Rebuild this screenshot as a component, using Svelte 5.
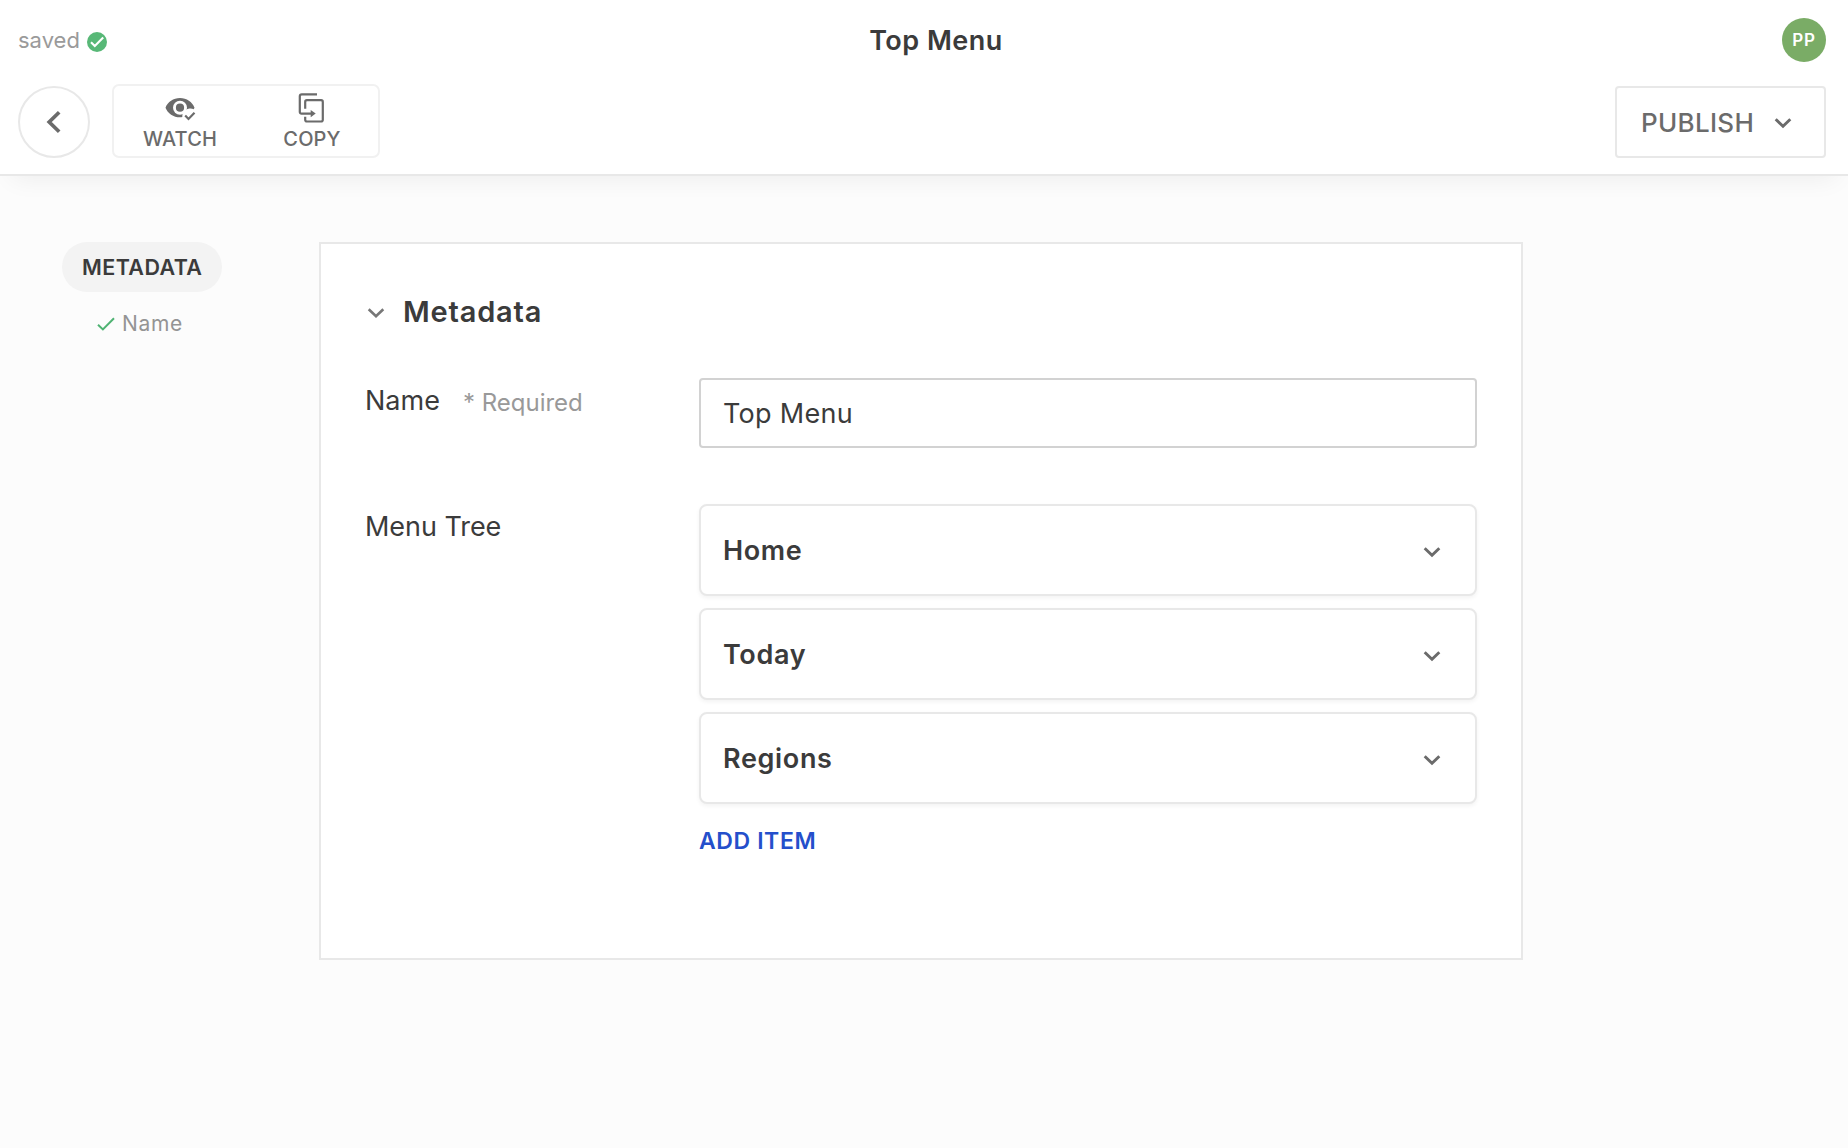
<script>
  const items = $state(['Home', 'Today', 'Regions']);
  let name = $state('Top Menu');
</script>

{#snippet chevron()}
  <svg class="chevron" width="18" height="12" viewBox="0 0 18 12" aria-hidden="true">
    <path d="M1.7 2.2 9 9.3l7.3-7.1" />
  </svg>
{/snippet}

<div class="page">
  <header>
    <div class="row title-row">
      <div class="status">
        <span>saved</span>
        <svg width="20" height="20" viewBox="0 0 20 20" aria-hidden="true">
          <circle cx="10" cy="10" r="10" fill="#58b877" />
          <path d="M4 10.2l3.8 3.9 8.4-8.5" fill="none" stroke="#fff" stroke-width="2.1" />
        </svg>
      </div>
      <h1>Top Menu</h1>
      <div class="avatar">PP</div>
    </div>
    <div class="row actions">
      <button class="back" aria-label="Back">
        <svg width="16" height="24" viewBox="0 0 16 24" aria-hidden="true">
          <path d="M13.2 2.2 3.2 12l10 9.8" fill="none" stroke="#6b6b6b" stroke-width="3.7" />
        </svg>
      </button>
      <div class="tools">
        <button class="tool watch">
          <svg width="32" height="32" viewBox="0 0 32 32" aria-hidden="true">
            <path fill="#6b6b6b" d="M1.5 14.7C3.8 8.9 9.3 5 16 5s12.2 3.9 14.5 9.7l-.8 1.6c-1.3-.7-2.7-.9-4.2-.7-2.800.3-5.200 2.100-6.500 4.700-.6 1.200-.8 2.400-.7 3.800-.8.200-1.500.2-2.300.2C9.300 24.300 3.800 20.500 1.500 14.700Z" />
            <circle cx="16" cy="14.7" r="7" fill="#fff" />
            <circle cx="16" cy="14.7" r="4.1" fill="#6b6b6b" />
            <path d="M21.200 22.500l3.300 3.500 6-6.300" fill="none" stroke="#6b6b6b" stroke-width="2.200" />
          </svg>
          <span>WATCH</span>
        </button>
        <button class="tool copy">
          <svg width="28" height="32" viewBox="0 0 28 32" aria-hidden="true">
            <g fill="none" stroke="#6b6b6b" stroke-width="2.2">
              <path d="M20 2.3H4.800a2 2 0 0 0-2 2v15.600a1.700 1.700 0 0 0 1.700 1.700h10" />
              <path d="M8.200 16.700V9.900a1.700 1.700 0 0 1 1.700-1.700h14.200a1.700 1.700 0 0 1 1.700 1.700v17.900a1.700 1.700 0 0 1-1.700 1.700H9.900a1.700 1.700 0 0 1-1.700-1.700v-3" />
            </g>
            <path d="M13.700 17.900l5 3.700-5 3.700z" fill="#6b6b6b" />
          </svg>
          <span>COPY</span>
        </button>
      </div>
      <button class="publish"><span>PUBLISH</span>{@render chevron()}</button>
    </div>
  </header>

  <div class="body">
    <nav>
      <div class="pill">METADATA</div>
      <div class="entry">
        <svg width="18" height="14" viewBox="0 0 18 14" aria-hidden="true">
          <path d="M1 7.7l4.900 4.700L17 1.300" fill="none" stroke="#4fb373" stroke-width="2" />
        </svg>
        <span>Name</span>
      </div>
    </nav>

    <main>
      <div class="heading">
        {@render chevron()}
        <h2>Metadata</h2>
      </div>
      <div class="field">
        <div class="label">
          <label for="name">Name</label>
          <span class="required">* Required</span>
        </div>
        <input id="name" bind:value={name} />
      </div>
      <div class="field">
        <div class="label tree">Menu Tree</div>
        <div class="cards">
          {#each items as item}
            <div class="card"><span>{item}</span>{@render chevron()}</div>
          {/each}
          <button class="add">ADD ITEM</button>
        </div>
      </div>
    </main>
  </div>
</div>

<style>
  :global(body) {
    background: #fcfcfc;
  }
  .page {
    min-height: 1148px;
    font-family: Inter, 'Liberation Sans', sans-serif;
    color: #3b3b3b;
    overflow: hidden;
  }
  .page :global(*) {
    box-sizing: border-box;
  }
  button {
    font: inherit;
    color: inherit;
    background: none;
    border: 0;
    padding: 0;
    margin: 0;
  }
  svg {
    display: block;
    flex: none;
  }
  .chevron path {
    fill: none;
    stroke: #6b6b6b;
    stroke-width: 2.9;
  }
  header {
    height: 176px;
    padding: 0 22px 0 18px;
    background: #fff;
    border-bottom: 2px solid #e8e8e8;
    box-shadow: 0 14px 24px -12px rgba(0, 0, 0, 0.065);
  }
  .row {
    display: flex;
  }
  .title-row {
    display: grid;
    grid-template-columns: 1fr auto 1fr;
    align-items: center;
    height: 80px;
  }
  .status {
    display: flex;
    align-items: center;
    gap: 7px;
    font-size: 22px;
    color: #9a9a9a;
  }
  .status svg {
    margin-top: 4px;
  }
  h1 {
    margin: 0 0 0 28px;
    font-size: 27px;
    font-weight: 600;
    letter-spacing: 0.5px;
  }
  .avatar {
    justify-self: end;
    display: flex;
    align-items: center;
    justify-content: center;
    width: 44px;
    height: 44px;
    border-radius: 50%;
    background: #7aac66;
    color: #fff;
    font-size: 17px;
    font-weight: 600;
    letter-spacing: 0.9px;
  }
  .actions {
    align-items: flex-end;
    height: 78px;
  }
  .back {
    display: flex;
    align-items: center;
    justify-content: center;
    width: 72px;
    height: 72px;
    border: 2px solid #e8e8e8;
    border-radius: 50%;
  }
  .tools {
    display: flex;
    width: 268px;
    height: 74px;
    margin-left: 22px;
    border: 2px solid #f1f1f1;
    border-radius: 7px;
  }
  .tool {
    display: flex;
    flex-direction: column;
    align-items: center;
    gap: 3px;
    width: 132px;
    padding-top: 6px;
    font-size: 20px;
    line-height: 24px;
    font-weight: 500;
    letter-spacing: 0.15px;
    color: #6b6b6b;
  }
  .watch svg {
    margin: 1px 0 -1px;
  }
  .copy svg {
    margin-right: 2px;
  }
  .publish {
    display: flex;
    align-items: center;
    justify-content: space-between;
    width: 211px;
    height: 72px;
    margin-left: auto;
    padding: 0 32px 0 24px;
    border: 2px solid #e8e8e8;
    border-radius: 4px;
    color: #6b6b6b;
    font-size: 26px;
    font-weight: 500;
    letter-spacing: 0.3px;
  }
  .publish span {
    margin-top: 1px;
  }
  .publish .chevron {
    margin-top: 2px;
  }
  .body {
    display: flex;
    align-items: flex-start;
    padding: 66px 0 0 62px;
  }
  nav {
    width: 257px;
  }
  .pill {
    width: 160px;
    height: 50px;
    padding-left: 20px;
    border-radius: 25px;
    background: #f3f3f3;
    font-size: 21.5px;
    line-height: 50px;
    font-weight: 600;
    letter-spacing: 0.4px;
  }
  .entry {
    display: flex;
    align-items: center;
    gap: 7px;
    height: 30px;
    margin-top: 16px;
    padding-left: 35px;
    font-size: 21px;
    letter-spacing: 0.65px;
    color: #949494;
  }
  .entry svg {
    margin-top: 2px;
  }
  main {
    width: 1204px;
    min-height: 718px;
    padding: 47px 44px 0;
    background: #fff;
    border: 2px solid #e8e8e8;
  }
  .heading {
    display: flex;
    align-items: center;
    gap: 18px;
    height: 40px;
    margin-bottom: 47px;
    padding-left: 2px;
  }
  .heading .chevron {
    margin-top: 3px;
  }
  .heading .chevron path {
    stroke: #777;
    stroke-width: 2.6;
  }
  h2 {
    margin: 0;
    font-size: 29px;
    font-weight: 600;
    letter-spacing: 0.8px;
  }
  .field {
    display: grid;
    grid-template-columns: 334px 778px;
  }
  .field + .field {
    margin-top: 56px;
  }
  .label {
    display: flex;
    padding-top: 3px;
    font-size: 27px;
    line-height: 40px;
  }
  .required {
    margin: 2px 0 0 23px;
    font-size: 24px;
    letter-spacing: 0;
    color: #999;
  }
  .tree {
    letter-spacing: -0.05px;
  }
  input {
    width: 778px;
    height: 70px;
    padding: 0 22px;
    border: 2px solid #d2d2d2;
    border-radius: 4px;
    background: #fff;
    color: #3b3b3b;
    font: 400 27px Inter, sans-serif;
    letter-spacing: 0.3px;
    outline: none;
  }
  .cards {
    display: flex;
    flex-direction: column;
    gap: 12px;
  }
  .card {
    display: flex;
    align-items: center;
    justify-content: space-between;
    height: 92px;
    padding: 0 34px 0 22px;
    border: 2px solid #e8e8e8;
    border-radius: 8px;
    background: #fff;
    box-shadow: 0 2px 4px rgba(0, 0, 0, 0.05);
    font-size: 27px;
    font-weight: 600;
    letter-spacing: 0.65px;
  }
  .card .chevron {
    margin-top: 3px;
  }
  .add {
    align-self: flex-start;
    margin-top: 10px;
    color: #244fcb;
    font-size: 23px;
    line-height: 30px;
    font-weight: 600;
    letter-spacing: 0.6px;
  }
</style>
